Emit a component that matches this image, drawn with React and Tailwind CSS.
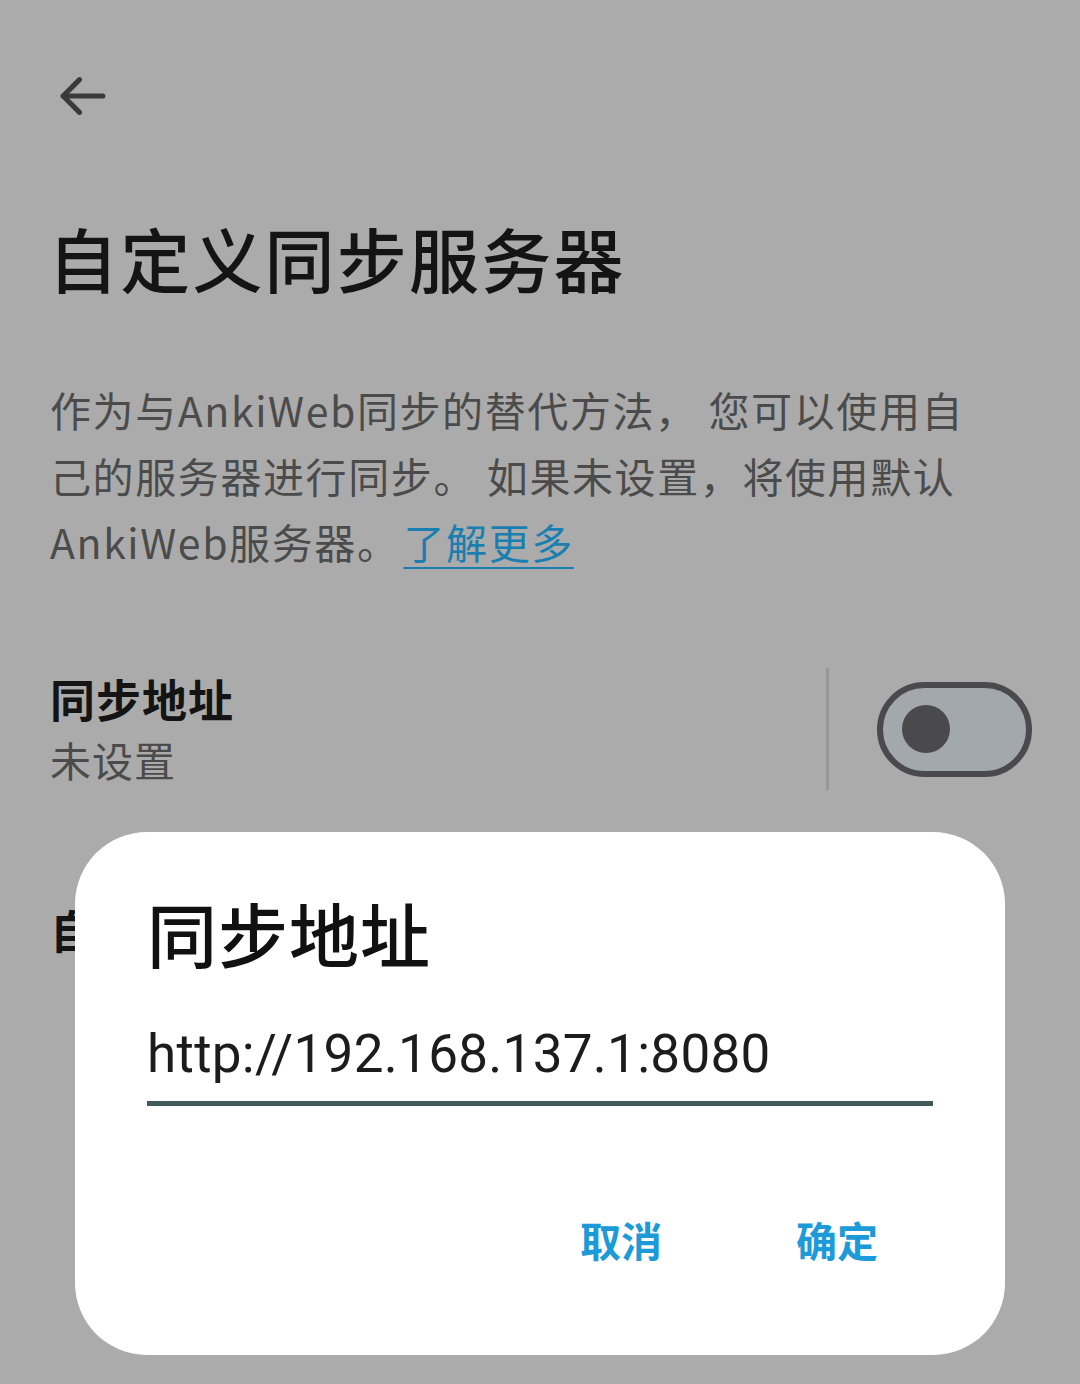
import React from "react";

const cjk = { fontFamily: '"Noto Sans CJK SC", "Noto Sans", sans-serif' };

export default function App() {
  return (
    <div className="relative w-[1080px] h-[1384px] overflow-hidden bg-[#ababab]" style={cjk}>
      <div className="flex flex-col pl-[50px] pr-[48px]">
        <div className="pt-[68px] pl-[5px]">
          <svg width="56" height="56" viewBox="0 0 24 24" fill="none" stroke="#3a3a3a" strokeWidth="2.2" strokeLinecap="round" strokeLinejoin="round">
            <path d="M20.5 12H3.5" />
            <path d="M10.5 5l-7 7 7 7" />
          </svg>
        </div>
        <h1 className="mt-[94px] text-[70px] leading-[80px] font-medium text-[#141414] tracking-[2.2px] -ml-[2px]">自定义同步服务器</h1>
        <p className="mt-[78px] text-[41px] leading-[66px] text-[#4b4b4b] tracking-[1.6px]">
          作为与AnkiWeb同步的替代方法， 您可以使用自<br />
          己的服务器进行同步。 如果未设置，将使用默认<br />
          AnkiWeb服务器。<span className="ml-[4px] text-[#1a7fb0] underline underline-offset-[8px] decoration-[2px]">了解更多</span>
        </p>
        <div className="mt-[94px] flex items-center">
          <div className="flex-1 flex flex-col">
            <div className="text-[45px] leading-[56px] font-bold text-[#141414] tracking-[1px]">同步地址</div>
            <div className="mt-[4px] text-[41px] leading-[56px] text-[#4b4b4b] tracking-[1px]">未设置</div>
          </div>
          <div className="w-[3px] h-[122px] bg-[#979797] mr-[48px]"></div>
          <div className="w-[155px] h-[95px] rounded-full border-[6px] border-[#4a4a4e] bg-[#a3a8ac] flex items-center pl-[19px]">
            <div className="w-[48px] h-[48px] rounded-full bg-[#4a4a4d]"></div>
          </div>
        </div>
        <div className="mt-[112px] text-[45px] leading-[56px] font-bold text-[#141414]">自动同步</div>
      </div>

      <div className="absolute left-[75px] top-[832px] w-[930px] h-[523px] rounded-[72px] bg-white flex flex-col px-[72px]">
        <div className="mt-[59px] text-[70px] leading-[84px] text-[#111] font-medium tracking-[1px]">同步地址</div>
        <div className="mt-[48px] text-[53px] leading-[62px] text-[#1c1c1c] tracking-[0.3px]" style={{ fontFamily: 'Roboto, "Noto Sans", sans-serif' }}>http://192.168.137.1:8080</div>
        <div className="mt-[16px] h-[5px] w-[786px] bg-[#3f5b5b]"></div>
        <div className="mt-[108px] flex justify-end pr-[55px] gap-[134px] text-[41px] leading-[50px] font-bold text-[#1d9ad8]">
          <span>取消</span>
          <span>确定</span>
        </div>
      </div>
    </div>
  );
}
